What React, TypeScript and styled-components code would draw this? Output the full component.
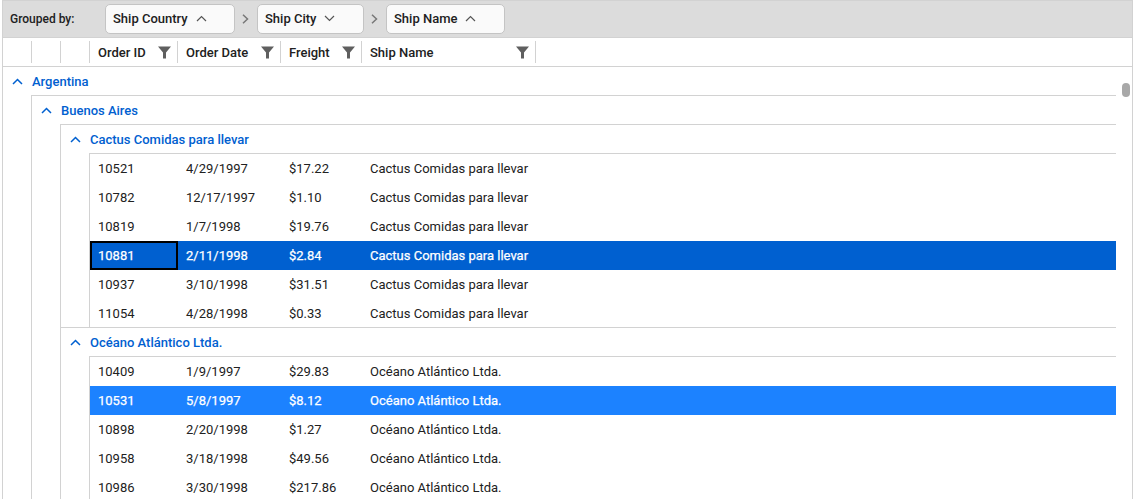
import React, { FunctionComponent } from "react";
import styled, { createGlobalStyle } from "styled-components";

const GlobalStyle = createGlobalStyle`
  html, body {
    margin: 0;
    height: 100%;
    background: #fff;
    overflow: hidden;
  }
  #root {
    height: 100%;
  }
`;

const LINE = "#d2d2d2";
const BLUE = "#0060d0";

const Page = styled.div`
  height: 100vh;
  box-sizing: border-box;
  padding: 0 2px 0 2px;
  font-family: Roboto, "Liberation Sans", sans-serif;
  font-size: 13px;
  color: #212121;
`;

const Grid = styled.div`
  position: relative;
  height: 100%;
  box-sizing: border-box;
  display: flex;
  flex-direction: column;
  border: 1px solid ${LINE};
  border-bottom: none;
  overflow: hidden;
`;

const GroupPanel = styled.div`
  flex: none;
  height: 36px;
  box-sizing: content-box;
  border-bottom: 1px solid ${LINE};
  background: #dcdcdc;
  display: flex;
  align-items: flex-start;
  padding-left: 7px;
`;

const PanelLabel = styled.span`
  width: 95px;
  align-self: center;
  font-size: 12px;
  font-weight: 500;
`;

const Chip = styled.div<{ $width: number }>`
  width: ${(p) => p.$width}px;
  height: 30px;
  margin-top: 3px;
  padding: 0 0 1px 7px;
  box-sizing: border-box;
  display: flex;
  align-items: center;
  gap: 8px;
  background: #fafafa;
  border: 1px solid #c4c4c4;
  border-radius: 5px;
  font-weight: 500;
`;

const ChipArrow = styled.svg`
  width: 22px;
  height: 12px;
  margin-top: 12px;
  flex: none;
`;

const HeaderRow = styled.div`
  flex: none;
  height: 28px;
  border-bottom: 1px solid ${LINE};
  display: flex;
  align-items: center;
`;

const HeaderCell = styled.div<{ $width: number }>`
  width: ${(p) => p.$width}px;
  height: 22px;
  box-sizing: border-box;
  flex: none;
  display: flex;
  align-items: center;
  justify-content: space-between;
  padding: 0 6px 0 8px;
  border-right: 1px solid ${LINE};
  font-weight: 500;
`;

const Body = styled.div`
  flex: 1;
  min-height: 0;
  overflow: hidden;
`;

const GroupHeader = styled.div`
  height: 28px;
  display: flex;
  align-items: center;
  gap: 9px;
  padding-left: 9px;
  color: ${BLUE};
  font-weight: 500;
`;

const Nested = styled.div`
  margin-left: 28px;
  margin-right: 16px;
  border-left: 1px solid ${LINE};
  border-top: 1px solid ${LINE};

  & & {
    margin-right: 0;
  }
`;

const Row = styled.div<{ $tone?: "dark" | "light" }>`
  height: 29px;
  display: flex;
  align-items: center;
  background: ${(p) =>
    p.$tone === "dark" ? BLUE : p.$tone === "light" ? "#1c82ff" : "transparent"};
  color: ${(p) => (p.$tone ? "#fff" : "inherit")};
  -webkit-text-stroke: ${(p) => (p.$tone ? "0.25px #fff" : "0")};

  &:last-child {
    height: 28px;
  }
`;

const Cell = styled.div<{ $width?: number; $focused?: boolean }>`
  width: ${(p) => (p.$width ? `${p.$width}px` : "auto")};
  height: 100%;
  box-sizing: border-box;
  flex: ${(p) => (p.$width ? "none" : 1)};
  display: flex;
  align-items: center;
  padding-left: 8px;
  border: ${(p) => (p.$focused ? "2px solid #000" : "none")};
  ${(p) => p.$focused && "padding-left: 6px;"}
`;

const ScrollThumb = styled.div`
  position: absolute;
  top: 82px;
  right: 2px;
  width: 8px;
  height: 14px;
  border-radius: 4px;
  background: #a8a8a8;
`;

const Chevron: FunctionComponent<{ up?: boolean; color: string; width?: number }> = ({
  up,
  color,
  width = 1.5,
}) => (
  <svg width="11" height="7" viewBox="0 0 11 7" fill="none">
    <path
      d={up ? "M1 6 L5.5 1.5 L10 6" : "M1 1 L5.5 5.5 L10 1"}
      stroke={color}
      strokeWidth={width}
    />
  </svg>
);

const Funnel = () => (
  <svg width="13" height="13" viewBox="0 0 13 13">
    <path d="M0 0.5 H13 L8 6.5 V12.5 L5 12.5 V6.5 Z" fill="#5f5f5f" />
  </svg>
);

const Separator = () => (
  <ChipArrow viewBox="0 0 22 12" fill="none">
    <path d="M8 1.8 L12.5 6 L8 10.2" stroke="#777" strokeWidth="1.5" />
  </ChipArrow>
);

const columns = [
  { title: "Order ID", width: 88 },
  { title: "Order Date", width: 103 },
  { title: "Freight", width: 81 },
  { title: "Ship Name", width: 174 },
];

type OrderRow = [string, string, string, ("dark" | "light")?];

const groups: { name: string; rows: OrderRow[] }[] = [
  {
    name: "Cactus Comidas para llevar",
    rows: [
      ["10521", "4/29/1997", "$17.22"],
      ["10782", "12/17/1997", "$1.10"],
      ["10819", "1/7/1998", "$19.76"],
      ["10881", "2/11/1998", "$2.84", "dark"],
      ["10937", "3/10/1998", "$31.51"],
      ["11054", "4/28/1998", "$0.33"],
    ],
  },
  {
    name: "Océano Atlántico Ltda.",
    rows: [
      ["10409", "1/9/1997", "$29.83"],
      ["10531", "5/8/1997", "$8.12", "light"],
      ["10898", "2/20/1998", "$1.27"],
      ["10958", "3/18/1998", "$49.56"],
      ["10986", "3/30/1998", "$217.86"],
    ],
  },
];

const App = () => (
  <Page>
    <GlobalStyle />
    <Grid>
      <GroupPanel>
        <PanelLabel>Grouped by:</PanelLabel>
        <Chip $width={130}>
          Ship Country <Chevron up color="#555" width={1.2} />
        </Chip>
        <Separator />
        <Chip $width={107}>
          Ship City <Chevron color="#555" width={1.2} />
        </Chip>
        <Separator />
        <Chip $width={119}>
          Ship Name <Chevron up color="#555" width={1.2} />
        </Chip>
      </GroupPanel>
      <HeaderRow>
        <HeaderCell $width={29} />
        <HeaderCell $width={29} />
        <HeaderCell $width={29} />
        {columns.map((c) => (
          <HeaderCell key={c.title} $width={c.width}>
            {c.title}
            <Funnel />
          </HeaderCell>
        ))}
      </HeaderRow>
      <Body>
        <GroupHeader>
          <Chevron up color={BLUE} />
          Argentina
        </GroupHeader>
        <Nested>
          <GroupHeader>
            <Chevron up color={BLUE} />
            Buenos Aires
          </GroupHeader>
          {groups.map((g) => (
            <Nested key={g.name}>
              <GroupHeader>
                <Chevron up color={BLUE} />
                {g.name}
              </GroupHeader>
              <Nested>
                {g.rows.map(([id, date, freight, tone]) => (
                  <Row key={id} $tone={tone}>
                    <Cell $width={88} $focused={id === "10881"}>
                      {id}
                    </Cell>
                    <Cell $width={103}>{date}</Cell>
                    <Cell $width={81}>{freight}</Cell>
                    <Cell>{g.name}</Cell>
                  </Row>
                ))}
              </Nested>
            </Nested>
          ))}
        </Nested>
      </Body>
      <ScrollThumb />
    </Grid>
  </Page>
);

export default App;
